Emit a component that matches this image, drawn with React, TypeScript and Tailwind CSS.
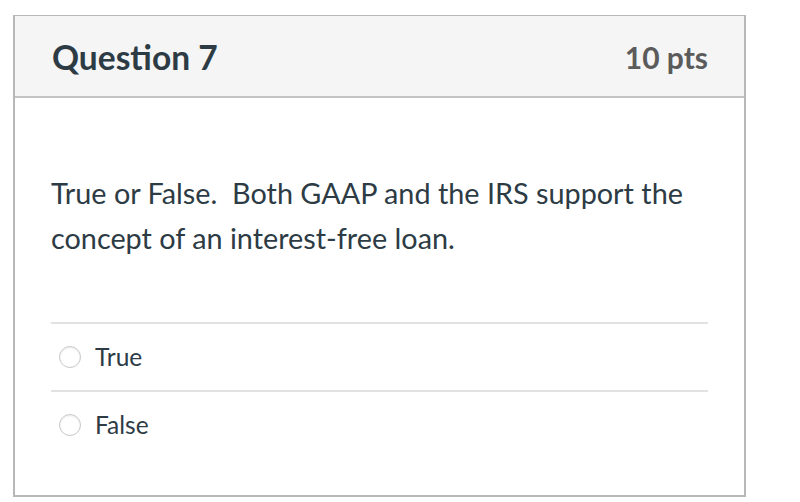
export default function App() {
  const options = ["True", "False"]
  return (
    <div className="min-h-[502px] bg-white pl-[13px] pt-[15px]" style={{ fontFamily: "Lato, 'Liberation Sans', sans-serif" }}>
      <div className="flex h-[482px] w-[733px] flex-col border-2 border-[#b8b8b8] border-t-[1.5px]">
        <div className="flex h-[82px] items-center justify-between border-b-2 border-[#c4c4c4] bg-[#f5f5f5] pl-[37px] pr-[36px] pt-[2px]">
          <h2 className="text-[33.5px] font-bold text-[#2d3b45]">Question 7</h2>
          <span className="text-[30px] font-bold text-[#5b5b5b]">10 pts</span>
        </div>
        <div className="px-[36px] pt-[73px]">
          <p className="text-[28.8px] leading-[45px] text-[#2d3b45]">
            True or False.&nbsp; Both GAAP and the IRS support the concept of an interest-free loan.
          </p>
          <div className="mt-[61px]">
            {options.map((o) => (
              <label key={o} className="flex h-[68px] items-center gap-[14px] border-t-2 border-[#e2e2e2] pl-[8px]">
                <span className="size-[22px] rounded-full border border-[#c8c8c8] bg-white shadow-[inset_0_1px_2px_rgba(0,0,0,0.08)]" />
                <span className="text-[24.5px] text-[#2d3b45]">{o}</span>
              </label>
            ))}
          </div>
        </div>
      </div>
    </div>
  )
}
